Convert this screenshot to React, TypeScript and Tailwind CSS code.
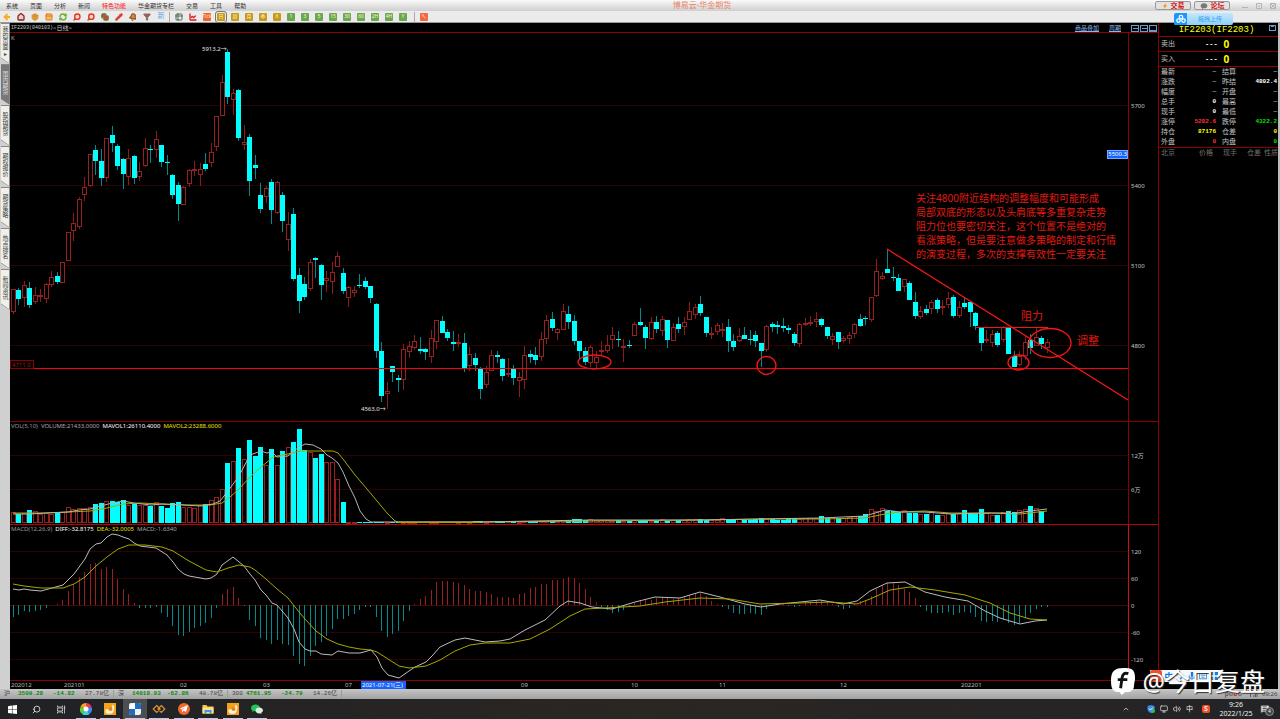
import type { ReactNode } from 'react'
import {
  ArrowLeft,
  Bell,
  ChartLine,
  ChevronUp,
  Copy,
  Filter,
  House,
  MessageSquareText,
  Monitor,
  Package,
  PanelTop,
  Pencil,
  RefreshCw,
  Search,
  Table2,
  Volume2,
} from 'lucide-react'

type Candle = [dir: 'u' | 'd', high: number, top: number, bottom: number, low: number]

// heights are thirds of a pixel, counted down from the base of each block
const candleBlocks: { base: number; rows: Candle[] }[] = [
  {
    base: 30,
    rows: [
      ['u', 778, 778, 846, 851], ['d', 774, 780, 806, 825], ['u', 753, 766, 803, 831], ['d', 757, 773, 826, 833],
      ['u', 772, 796, 815, 822], ['u', 778, 796, 800, 816], ['u', 759, 763, 806, 818], ['u', 723, 742, 765, 771],
      ['d', 726, 738, 755, 762], ['u', 697, 697, 758, 758], ['u', 606, 606, 692, 692], ['u', 549, 580, 602, 632],
      ['u', 502, 508, 590, 598], ['u', 442, 472, 494, 513], ['u', 371, 373, 467, 470], ['d', 345, 360, 392, 435],
      ['d', 357, 393, 445, 468], ['u', 323, 325, 443, 456], ['d', 288, 315, 338, 366], ['d', 341, 348, 409, 419],
      ['d', 384, 387, 431, 476], ['u', 357, 385, 440, 464], ['d', 374, 378, 444, 461], ['u', 397, 423, 440, 452],
      ['u', 324, 354, 407, 410], ['d', 346, 357, 361, 398], ['u', 303, 328, 359, 385], ['d', 345, 345, 397, 410],
      ['d', 375, 396, 399, 435], ['d', 432, 435, 495, 507], ['d', 457, 466, 523, 573], ['u', 468, 472, 524, 524],
      ['u', 416, 421, 463, 470], ['u', 392, 417, 421, 437], ['u', 398, 418, 436, 468], ['d', 369, 401, 416, 423],
      ['u', 340, 367, 398, 410], ['u', 257, 259, 350, 362], ['u', 135, 157, 257, 257], ['d', 57, 66, 200, 222],
    ],
  },
  {
    base: 40,
    rows: [
      ['u', 147, 160, 180, 225], ['d', 147, 150, 295, 302], ['u', 255, 307, 314, 330], ['d', 281, 292, 422, 467],
      ['d', 345, 376, 383, 417], ['d', 429, 466, 506, 518], ['u', 438, 444, 471, 488], ['d', 417, 426, 510, 551],
      ['u', 423, 427, 518, 521], ['d', 457, 465, 543, 576], ['u', 516, 552, 599, 633], ['d', 503, 523, 718, 723],
      ['d', 685, 705, 784, 819], ['d', 711, 731, 772, 780], ['u', 657, 667, 746, 753], ['d', 650, 654, 661, 714],
      ['d', 671, 676, 735, 780], ['u', 692, 715, 723, 756], ['u', 666, 697, 725, 761], ['u', 636, 648, 680, 680],
      ['d', 684, 699, 753, 762], ['u', 738, 742, 773, 801], ['u', 737, 751, 759, 771], ['d', 703, 735, 738, 745],
      ['d', 711, 724, 740, 746], ['d', 739, 739, 775, 788], ['d', 790, 793, 932, 954], ['d', 906, 933, 1067, 1086],
      ['u', 1026, 1053, 1063, 1106], ['d', 979, 979, 995, 1026], ['d', 1005, 1015, 1019, 1055], ['u', 912, 928, 1019, 1050],
      ['u', 903, 918, 937, 954], ['u', 885, 904, 923, 930], ['d', 891, 926, 932, 941], ['d', 925, 928, 937, 960],
      ['u', 870, 894, 950, 969], ['u', 839, 841, 906, 926], ['d', 828, 844, 878, 878], ['d', 867, 876, 894, 903],
      ['d', 873, 905, 911, 934],
    ],
  },
  {
    base: 270,
    rows: [
      ['u', 192, 216, 221, 230], ['d', 189, 219, 298, 305], ['u', 230, 253, 287, 302], ['d', 249, 264, 286, 303],
      ['d', 291, 294, 357, 387], ['u', 288, 306, 344, 353], ['u', 240, 255, 302, 302], ['d', 243, 255, 261, 279],
      ['d', 264, 267, 318, 333], ['u', 264, 310, 315, 322], ['d', 286, 295, 323, 345], ['u', 306, 321, 332, 381],
      ['u', 228, 255, 329, 356], ['d', 240, 252, 261, 279], ['d', 231, 255, 269, 284], ['u', 187, 208, 260, 272],
      ['u', 136, 151, 208, 222], ['d', 126, 147, 175, 183], ['u', 174, 178, 188, 210], ['u', 102, 124, 179, 179],
      ['d', 108, 131, 155, 178], ['d', 135, 153, 212, 225], ['d', 213, 214, 243, 268], ['d', 231, 242, 275, 284],
      ['u', 226, 231, 278, 291], ['u', 244, 260, 279, 294], ['u', 212, 240, 245, 258], ['u', 195, 226, 243, 249],
      ['u', 172, 196, 211, 237], ['d', 183, 207, 210, 230], ['u', 208, 228, 230, 275], ['d', 209, 224, 228, 234],
      ['u', 156, 163, 199, 199], ['d', 114, 156, 165, 167], ['d', 166, 171, 204, 237], ['u', 141, 156, 206, 210],
      ['d', 138, 157, 178, 188], ['u', 138, 148, 183, 197], ['d', 151, 151, 211, 235], ['u', 160, 171, 212, 212],
      ['d', 142, 162, 178, 188], ['u', 140, 156, 170, 195], ['u', 96, 123, 149, 151], ['u', 102, 111, 135, 146],
      ['d', 78, 103, 129, 138], ['d', 141, 141, 189, 201], ['u', 171, 189, 191, 208], ['u', 160, 165, 187, 196],
      ['u', 160, 176, 182, 201], ['d', 148, 172, 214, 246], ['d', 192, 213, 232, 243],
    ],
  },
  {
    base: 240,
    rows: [
      ['u', 264, 287, 303, 307], ['d', 262, 286, 298, 298], ['d', 270, 296, 300, 314], ['d', 273, 286, 303, 320],
      ['d', 310, 310, 332, 382], ['u', 256, 258, 331, 335], ['d', 247, 251, 262, 275], ['d', 243, 256, 262, 283],
      ['d', 235, 258, 265, 276], ['d', 255, 264, 269, 283], ['d', 276, 282, 309, 319], ['u', 248, 253, 311, 320],
      ['u', 235, 248, 255, 258], ['u', 228, 246, 250, 258], ['u', 217, 238, 245, 260], ['d', 233, 237, 255, 261],
      ['d', 261, 262, 289, 296], ['u', 279, 289, 301, 314], ['d', 276, 277, 305, 327], ['u', 288, 295, 302, 308],
      ['u', 275, 286, 297, 311], ['u', 249, 251, 282, 293], ['d', 222, 236, 257, 262], ['d', 228, 233, 238, 255],
      ['u', 172, 172, 239, 245], ['u', 57, 94, 167, 171], ['u', 95, 107, 116, 120], ['d', 28, 86, 98, 98],
      ['d', 82, 112, 114, 123], ['d', 103, 115, 152, 153], ['u', 118, 118, 140, 156], ['d', 122, 130, 180, 180],
      ['d', 156, 186, 228, 238], ['u', 198, 213, 230, 236], ['d', 196, 206, 220, 226], ['u', 180, 187, 206, 221],
      ['d', 174, 180, 206, 220], ['u', 180, 199, 203, 225], ['u', 156, 174, 194, 203], ['d', 165, 171, 229, 233],
      ['u', 182, 202, 228, 233], ['d', 174, 190, 201, 208], ['d', 183, 187, 216, 260], ['d', 215, 218, 258, 270],
      ['d', 262, 262, 309, 333], ['u', 270, 297, 300, 310], ['u', 270, 282, 308, 320], ['d', 273, 279, 316, 320],
      ['u', 258, 260, 300, 306], ['d', 260, 260, 341, 341], ['d', 334, 347, 380, 380], ['u', 333, 347, 375, 378],
      ['u', 288, 307, 347, 360], ['d', 283, 300, 324, 342], ['u', 264, 292, 318, 318], ['d', 287, 295, 312, 328],
      ['u', 297, 307, 323, 338],
    ],
  },
]

const candles = candleBlocks.flatMap(({ base, rows }) =>
  rows.map(([dir, ...ys]) => ({ dir, ys: ys.map((y) => Math.round(base + y / 3)) })),
)

const volumes = [
  11, 9, 10, 13, 12, 9, 10, 9, 10, 11, 16, 14, 15, 15, 16, 19, 20, 22, 22, 21, 23, 18, 19, 18, 18, 17, 21, 17, 15,
  20, 21, 16, 16, 15, 18, 19, 23, 26, 34, 60, 62, 75, 64, 83, 67, 76, 58, 74, 58, 72, 76, 81, 94, 73, 71, 65, 69, 61,
  61, 44, 21, 1, 1, 1, 1, 1, 1, 1, 1, 1, 1, 1, 1, 1, 1, 1, 1, 1, 1, 1, 1, 1, 1, 1, 2, 2, 1, 2, 2, 1, 2, 2, 1, 2, 2,
  2, 2, 2, 2, 2, 3, 3, 4, 4, 3, 4, 3, 3, 3, 2, 3, 2, 2, 3, 2, 3, 2, 2, 4, 2, 3, 3, 3, 4, 4, 4, 3, 3, 3, 5, 4, 3, 4,
  3, 3, 4, 5, 4, 4, 3, 3, 4, 5, 4, 5, 5, 5, 7, 5, 6, 5, 5, 6, 7, 7, 9, 14, 12, 15, 12, 12, 11, 13, 10, 10, 9, 9, 12,
  8, 8, 10, 9, 10, 13, 9, 9, 14, 10, 8, 8, 11, 12, 11, 13, 14, 17, 15, 12,
].slice(0, candles.length)

const macd = [
  -12, -10, -6, -7, -6, -5, -3, 0, 1, 5, 14, 20, 28, 33, 41, 42, 36, 38, 36, 26, 16, 11, 2, -3, -3, -3, -2, -8, -12,
  -21, -30, -31, -27, -23, -21, -18, -13, -3, 11, 16, 18, 7, -1, -15, -21, -33, -35, -39, -35, -39, -40, -51, -59, -61,
  -51, -41, -37, -31, -24, -14, -14, -11, -9, -5, -2, -2, -12, -26, -32, -29, -26, -16, -6, 1, 6, 9, 15, 23, 24, 24,
  23, 22, 20, 16, 14, 14, 13, 11, 8, 8, 8, 7, 11, 12, 17, 18, 21, 21, 25, 25, 26, 28, 27, 22, 16, 8, 3, -2, -5, -8,
  -7, -5, -2, 2, 5, 6, 5, 7, 8, 7, 6, 7, 9, 10, 12, 12, 9, 4, 1, -2, -4, -8, -9, -9, -8, -9, -10, -4, -1, 1, 1, -1,
  -2, -1, 2, 3, 4, 5, 4, 1, -2, -4, -3, 1, 4, 5, 9, 16, 20, 22, 22, 20, 16, 13, 7, -2, -6, -8, -8, -8, -7, -10, -8,
  -7, -8, -12, -16, -17, -16, -17, -15, -18, -20, -18, -13, -8, -4, -2, -2,
].slice(0, candles.length)

const mavol1 =
  '13,514 30,514 46,513 68,512 79,510 90,509 101,506 112,503 123,501 134,503 151,505 162,504 183,505 200,506 213,504 220,501 228,491 239,476 250,455 261,451 267,453 272,452 277,457 288,456 294,451 299,447 305,444 313,445 321,449 327,455 332,458 338,463 343,472 349,486 355,498 360,511 366,519 371,522 480,522 590,520 700,520 760,519 820,518 865,516 885,510 900,512 925,512 950,514 990,513 1003,513 1010,514 1030,511 1047,509'
const mavol2 =
  '13,513 46,513 68,512 90,511 107,508 123,504 140,503 162,504 187,505 210,505 222,503 230,497 239,489 250,477 261,467 272,458 277,456 288,454 300,451 320,451 333,451 338,453 343,459 355,475 367,489 377,501 387,513 395,521 398,522 480,522 590,521 700,520 760,519 820,519 865,518 885,514 900,512 925,511 950,513 990,513 1020,514 1047,511'
const diff =
  '13,589 19,590 24,589 30,590 41,591 52,588 63,585 74,574 85,559 90,549 96,544 101,543 107,537 112,534 118,535 123,537 129,539 134,543 140,546 156,548 167,555 173,562 178,569 184,574 189,576 206,579 211,578 217,574 222,565 233,557 244,566 250,574 255,580 261,590 266,595 272,603 277,605 288,618 294,629 299,642 305,649 310,651 316,651 321,654 332,655 338,651 349,653 360,653 371,650 377,657 382,668 388,675 399,678 409,671 415,667 426,662 432,656 440,647 455,640 465,638 475,640 485,642 500,641 510,639 525,630 545,620 560,606 568,601 580,603 592,607 612,609 635,602 655,597 680,598 700,592 720,597 745,604 761,607 780,604 800,602 820,600 843,604 857,601 870,591 887,583 905,582 925,592 945,597 968,601 985,611 1000,618 1020,624 1035,621 1047,620'
const dea =
  '13,584 24,586 41,588 63,588 74,584 85,577 96,566 107,557 118,549 129,545 145,545 162,547 173,551 189,561 206,570 217,572 228,568 239,565 250,567 255,570 266,579 277,589 288,598 299,612 305,619 316,631 327,639 338,644 349,647 360,649 371,650 377,652 388,659 399,666 409,668 426,666 440,660 455,651 470,645 485,643 510,643 530,639 550,629 570,616 585,609 605,608 640,606 665,602 700,598 730,599 760,604 800,603 830,602 857,604 870,599 890,590 910,587 935,590 965,595 990,603 1010,613 1030,619 1047,620'

const menus = ['系统', '页面', '分析', '新闻', '特色功能', '华金期货专栏', '交易', '工具', '帮助']

const pageTabs = ['我的页面▸', '国内期货', '股指期货', '期权报价', '期货策略', '热点排名', '新闻资讯']

const periods: { label: string; look: string }[] = [
  { label: 'Tick', look: 'bg-[#f0642d]' },
  { label: '日', look: 'bg-[#c79a16] outline outline-offset-1 outline-[#777]' },
  { label: '周', look: 'bg-[#c79a16]' },
  { label: '月', look: 'bg-[#c79a16]' },
  { label: '季', look: 'bg-[#c79a16]' },
  { label: 'X', look: 'bg-[#c79a16]' },
  { label: '1', look: 'bg-[#6aa850]' },
  { label: '3', look: 'bg-[#6aa850]' },
  { label: '5', look: 'bg-[#6aa850]' },
  { label: '15', look: 'bg-[#6aa850]' },
  { label: '30', look: 'bg-[#6aa850]' },
  { label: '60', look: 'bg-[#6aa850]' },
  { label: '2H', look: 'bg-[#6aa850]' },
  { label: '4H', look: 'bg-[#6aa850]' },
  { label: 'Y', look: 'bg-[#6aa850]' },
]

const tools = [
  { name: '后退', icon: <ArrowLeft className="size-2 fill-[#ffc21a] text-[#f5b020]" strokeWidth={6} /> },
  { name: '首页', icon: <House className="size-2 fill-[#e8d0c8] text-[#8c2626]" strokeWidth={4} /> },
  { name: '数据', icon: <Package className="size-2 fill-[#e8a030] text-[#c98a2c]" strokeWidth={2} /> },
  { name: '窗口', icon: <PanelTop className="size-2 fill-[#f6c04c] text-[#e0762a]" strokeWidth={3} /> },
  { name: '刷新', icon: <RefreshCw className="size-2 text-[#6fae2e]" strokeWidth={4} /> },
  { name: '放大', icon: <Search className="size-2 -scale-x-100 fill-[#ffd9d0] text-[#e0331f]" strokeWidth={4} /> },
  { name: '缩小', icon: <Search className="size-2 -scale-x-100 fill-[#ffd9d0] text-[#e0331f]" strokeWidth={4} /> },
  { name: '叠加', icon: <Copy className="size-2 fill-[#c8443a] text-[#4b9a4b]" strokeWidth={3} /> },
  { name: '画线', icon: <Pencil className="size-2 fill-[#e6392c] text-[#d83a30]" strokeWidth={3} /> },
  { name: '预警', icon: <Bell className="size-2 rotate-12 fill-[#d98a2a] text-[#7f4a20]" strokeWidth={3} /> },
  { name: '选股', icon: <Filter className="size-2 fill-[#c05050] text-[#777]" strokeWidth={3} /> },
  { name: '新闻', icon: <span className="text-[7px] text-[#6aa4e8]">新</span> },
]

const quoteRows: [string, string, string, string, string, string][] = [
  ['最新', '—', 'text-[#aaa]', '结算', '—', 'text-[#aaa]'],
  ['涨跌', '—', 'text-[#aaa]', '昨结', '4802.4', 'text-white'],
  ['幅度', '—', 'text-[#aaa]', '开盘', '—', 'text-[#aaa]'],
  ['总手', '0', 'text-white', '最高', '—', 'text-[#aaa]'],
  ['现手', '0', 'text-white', '最低', '—', 'text-[#aaa]'],
  ['涨停', '5282.6', 'text-[#ff3232]', '跌停', '4322.2', 'text-[#00e600]'],
  ['持仓', '87176', 'text-[#ffff00]', '仓差', '0', 'text-[#ffff00]'],
  ['外盘', '0', 'text-[#ff3232]', '内盘', '0', 'text-[#00e600]'],
]

const indexes = [
  { name: '沪', price: '3509.28', change: '-14.82', amount: '27.78亿' },
  { name: '深', price: '14018.93', change: '-62.86', amount: '48.78亿' },
  { name: '300', price: '4761.95', change: '-24.79', amount: '14.26亿' },
]

// the plots start right of the page tabs
const ORIGIN_X = 10
const FIRST_X = 13.3
const STEP = 5.5

const slotX = (i: number) => Math.floor(FIRST_X + i * STEP)

function Plot({ top, height, grid, children }: { top: number; height: string; grid: number[]; children: ReactNode }) {
  return (
    <svg className={`${height} w-0 min-w-0 flex-1`} shapeRendering="crispEdges">
      {grid.map((y) => (
        <line key={y} x1="0" x2="100%" y1={y - top + 0.5} y2={y - top + 0.5} stroke="#2e0202" />
      ))}
      <g transform={`translate(${-ORIGIN_X} ${-top})`}>{children}</g>
    </svg>
  )
}

function Axis({ top, labels, look }: { top: number; labels: [number, string][]; look: string }) {
  return (
    <svg className={`w-[30px] shrink-0 border-l ${look}`} aria-label="坐标">
      {labels.map(([y, text]) => (
        <text key={y} x="2" y={y - top + 3} fontSize="6" fill="#c4c4c4">
          {text}
        </text>
      ))}
    </svg>
  )
}

function PricePanel() {
  return (
    <section className="relative flex border-b border-[#8b0000]">
      <Plot top={33} height="h-[388px]" grid={[105, 185, 265, 345]}>
        {candles.map(({ dir, ys: [high, top, bottom, low] }, i) => {
          const x = slotX(i)
          const h = Math.max(1, bottom - top)
          return dir === 'd' ? (
            <g key={i}>
              <rect x={x} y={high} width="1" height={low - high} fill="#008c8c" />
              <rect x={x - 2} y={top} width="5" height={h} fill="#00ffff" />
            </g>
          ) : (
            <g key={i}>
              <rect x={x} y={high} width="1" height={low - high} fill="#8c1c1c" />
              <rect x={x - 1.5} y={top + 0.5} width="4" height={Math.max(h - 1, 0.5)} fill="#000" stroke="#982020" />
            </g>
          )
        })}
        <rect x="10" y="368" width="1118" height="1" fill="#ff0000" />
        <rect x="10.5" y="360.5" width="23" height="8" fill="none" stroke="#8b0000" />
        <g fill="none" stroke="#f21616" shapeRendering="auto">
          <line x1="887" y1="249" x2="1128" y2="400" strokeWidth="1.3" />
          <line x1="976" y1="327.5" x2="1048" y2="327.5" />
          <ellipse cx="594.5" cy="362" rx="16.5" ry="7" strokeWidth="1.4" />
          <ellipse cx="766.5" cy="365.5" rx="9.5" ry="9" strokeWidth="1.4" />
          <ellipse cx="1018.5" cy="362.5" rx="10.5" ry="7.5" strokeWidth="1.4" />
          <ellipse cx="1050" cy="343" rx="21" ry="14.5" strokeWidth="1.4" />
        </g>
        <text x="12" y="367" fontSize="6" fill="#a01818">
          4711.0
        </text>
        <text x="11" y="40" fontSize="6" fill="#aaa">
          K
        </text>
        <text x="202" y="51" fontSize="6" fill="#e4e4e4">
          5913.2→
        </text>
        <text x="361" y="411" fontSize="6" fill="#e4e4e4">
          4563.0→
        </text>
        <g fontSize="11" fill="#e01a10">
          <text x="1021" y="320">
            阻力
          </text>
          <text x="1077" y="345">
            调整
          </text>
        </g>
      </Plot>
      <p className="absolute top-[158px] left-[906px] text-[10px] leading-[14px] whitespace-nowrap text-[#e01a10]">
        关注4800附近结构的调整幅度和可能形成
        <br />
        局部双底的形态以及头肩底等多重复杂走势
        <br />
        阻力位也要密切关注，这个位置不是绝对的
        <br />
        看涨策略，但是要注意做多策略的制定和行情
        <br />
        的演变过程，多次的支撑有效性一定要关注
      </p>
      <Axis
        top={33}
        look="h-[388px] border-[#8b0000]"
        labels={[
          [105, '5700'],
          [185, '5400'],
          [265, '5100'],
          [345, '4800'],
        ]}
      />
      <span className="absolute top-[117px] right-[30px] h-[9px] bg-[#1464ff] px-px text-[6px] leading-[9px] outline -outline-offset-1 outline-[#7aa8ff]">
        5500.3
      </span>
    </section>
  )
}

function VolumePanel() {
  return (
    <section className="relative flex border-b border-[#c00000]">
      <Plot top={422} height="h-[102px]" grid={[455, 489]}>
        {volumes.map((h, i) => {
          const x = slotX(i)
          return candles[i].dir === 'd' ? (
            <rect key={i} x={x - 2} y={523 - h} width="5" height={h} fill="#00ffff" />
          ) : (
            <rect key={i} x={x - 1.5} y={523.5 - h} width="4" height={Math.max(h - 1, 0.5)} fill="none" stroke="#982020" />
          )
        })}
        <g fill="none" shapeRendering="auto">
          <polyline points={mavol2} stroke="#a8a800" />
          <polyline points={mavol1} stroke="#b4b4b4" />
          <line x1="398" y1="522.5" x2="480" y2="522.5" stroke="#a8a800" />
        </g>
      </Plot>
      <p className="absolute top-0 left-px flex gap-[3px] text-[6px] leading-[9px] whitespace-nowrap">
        <span className="text-[#999]">VOL(5,10)</span>
        <span className="text-[#aaa]">VOLUME:21433.0000</span>
        <span>MAVOL1:26110.4000</span>
        <span className="text-[#e6e600]">MAVOL2:23288.6000</span>
      </p>
      <Axis
        top={422}
        look="h-[102px] border-[#8b0000]"
        labels={[
          [455, '12万'],
          [489, '6万'],
        ]}
      />
    </section>
  )
}

function MacdPanel() {
  return (
    <section className="relative flex flex-1">
      <Plot top={525} height="h-[155px]" grid={[551, 578, 605, 632, 659]}>
        <rect x="10" y="605" width="1118" height="1" fill="#4a0606" />
        {macd.map((v, i) => (
          <rect
            key={i}
            x={slotX(i)}
            y={605 - Math.max(v, 0)}
            width="1"
            height={Math.abs(v)}
            fill={v > 0 ? '#982020' : '#008c8c'}
          />
        ))}
        <g fill="none" shapeRendering="auto">
          <polyline points={diff} stroke="#bcbcbc" />
          <polyline points={dea} stroke="#a8a800" />
        </g>
      </Plot>
      <p className="absolute top-0 left-px flex gap-[3px] text-[6px] leading-[9px] whitespace-nowrap">
        <span className="text-[#999]">MACD(12,26,9)</span>
        <span>DIFF:-32.8175</span>
        <span className="text-[#e6e600]">DEA:-32.0005</span>
        <span className="text-[#aaa]">MACD:-1.6340</span>
      </p>
      <Axis
        top={525}
        look="h-[155px] border-[#d01010]"
        labels={[
          [551, '120'],
          [578, '60'],
          [605, '0'],
          [632, '-60'],
          [659, '-120'],
        ]}
      />
    </section>
  )
}

function DateAxis() {
  return (
    <svg className="h-[9px] w-full border-t border-[#8b0000] bg-black" fontSize="6" fill="#bbb">
      <text x="1" y="6">202012</text>
      <text x="54" y="6">202101</text>
      <text x="170" y="6">02</text>
      <text x="253" y="6">03</text>
      <text x="335" y="6">07</text>
      <rect x="351" width="45" height="8" fill="#1464ff" />
      <text x="352" y="6" fill="#fff">2021-07-21(三)</text>
      <text x="511" y="6">09</text>
      <text x="621" y="6">10</text>
      <text x="709" y="6">11</text>
      <text x="830" y="6">12</text>
      <text x="951" y="6">202201</text>
    </svg>
  )
}

function TitleBar() {
  return (
    <header className="relative flex h-[11px] items-center bg-linear-to-b from-[#fafafa] to-[#cfcfcf] text-[6px] text-[#333]">
      <nav className="flex gap-3 pl-1.5">
        {menus.map((menu) => (
          <button key={menu} className={menu === '特色功能' ? 'leading-[10px] text-[#ff1414]' : 'leading-[10px]'}>
            {menu}
          </button>
        ))}
      </nav>
      <h1 className="absolute inset-x-0 top-0 mx-auto w-max pl-[124px] font-['Liberation_Serif','Noto_Sans_CJK_SC',serif] text-[8px] leading-[11px] text-[#e88464]">
        博易云-华金期货
      </h1>
      <div className="relative ml-auto flex items-center gap-[3px] font-bold">
        <button className="flex h-[9px] w-9 items-center justify-center gap-[3px] rounded-[2px] border border-[#999] bg-[#e2e2e2] text-[7px] leading-[7px] text-[#d81414]">
          <svg className="size-1.5" viewBox="0 0 10 10" fill="#f59a1a">
            <path d="M7 0 1 6h3L3 10l6-6H6z" />
          </svg>
          交易
        </button>
        <button className="flex h-[9px] w-9 items-center justify-center gap-[3px] rounded-[2px] border border-[#999] bg-[#e2e2e2] text-[7px] leading-[7px] text-[#d81414]">
          <svg className="size-2" viewBox="0 0 12 12" fill="#777">
            <path d="M6 2C3 2 1 3.500 1 6c0 1.500 1 2.500 2 3v2l2-1.500h1c3 0 5-1.500 5-3.500S9 2 6 2z" />
          </svg>
          论坛
        </button>
      </div>
      <div className="flex gap-2 pr-1 pl-3 text-[#aaa]">
        <button className="w-1.5" aria-label="最小化">
          <svg className="size-1.5" viewBox="0 0 6 6" stroke="#b4b4b4">
            <path d="M0 4.500h6" />
          </svg>
        </button>
        <button className="w-1.5" aria-label="最大化">
          <svg className="size-1.5" viewBox="0 0 6 6" fill="none" stroke="#b4b4b4">
            <path d="M.5.500h5v5h-5zM2 3h2" />
          </svg>
        </button>
        <button className="w-1.5" aria-label="关闭">
          <svg className="size-1.5" viewBox="0 0 6 6" fill="none" stroke="#b4b4b4">
            <path d="M.5.500h5v5h-5zM1 1l4 4M5 1 1 5" />
          </svg>
        </button>
      </div>
    </header>
  )
}

function Toolbar() {
  return (
    <div className="flex h-3 items-center border-b border-[#999] bg-[#ebebeb]">
      {tools.map((tool) => (
        <button key={tool.name} className="flex h-[11px] w-3.5 items-center justify-center" aria-label={tool.name}>
          {tool.icon}
        </button>
      ))}
      <span className="ml-px h-2.5 w-px bg-[#aaa]" />
      <button className="ml-0.5 flex h-[11px] w-3.5 items-center justify-center" aria-label="报价">
        <Table2 className="size-2 text-[#4e6a58]" strokeWidth={3} />
      </button>
      <button className="flex h-[11px] w-3.5 items-center justify-center" aria-label="走势">
        <ChartLine className="size-2 text-[#d82020]" strokeWidth={4} />
      </button>
      {periods.map((period) => (
        <button key={period.label} className="flex h-[11px] w-3.5 items-center justify-center">
          <span
            className={`flex size-2 items-center justify-center rounded-[1px] text-[5px] text-[#fff6cc] ${period.look}`}
          >
            {period.label}
          </span>
        </button>
      ))}
      <span className="ml-1 h-2.5 w-px bg-[#aaa]" />
      <button className="ml-0.5 flex h-[11px] w-3.5 items-center justify-center" aria-label="设置">
        <span className="flex size-2 items-center justify-center rounded-[1px] bg-[#f2683c] text-[5px] text-white">↖</span>
      </button>
    </div>
  )
}

function PageTabs() {
  return (
    <aside className="flex w-[10px] shrink-0 flex-col bg-[#d0d0d0]">
      {pageTabs.map((tab, i) => (
        <button
          key={tab}
          className="h-[41px] w-full bg-[#888] pl-px [clip-path:polygon(10%_0,100%_0,100%_100%,10%_86%)]"
        >
          <span
            className={`flex h-[39px] w-[8px] items-center justify-center pb-1 text-[6px] leading-[8px] whitespace-nowrap [text-orientation:upright] [writing-mode:vertical-rl] [clip-path:polygon(0_0,100%_0,100%_100%,0_86%)] ${
              i === 1 ? 'bg-[#777] text-[#ddd]' : 'bg-[#f0f0e8] text-[#444]'
            }`}
          >
            {tab}
          </span>
        </button>
      ))}
    </aside>
  )
}

function ChartHeader() {
  return (
    <div className="flex h-[9px] items-center border-b border-[#8b0000] pr-px pl-px text-[6px] leading-[8px]">
      <span className="font-['Liberation_Mono','Noto_Sans_CJK_SC',monospace] text-[5px] text-[#ccc]">IF2203(040103)</span>
      <span className="text-[#ccc]">&lt;日线&gt;</span>
      <a href="#overlay" className="ml-auto text-[#8cb8e8] underline">
        商品叠加
      </a>
      <a href="#period" className="ml-2.5 text-[#8cb8e8] underline">
        周期
      </a>
      <svg className="ml-2.5 h-2 w-[26px]" fill="none" stroke="#6c9ccc" shapeRendering="crispEdges">
        <path d="M.5 1.500h7v6h-7zM9.500 1.500h7v6h-7zM18.500 1.500h7v6h-7zM2 4.500h5M11 4.500h5M19 6.500h6" />
      </svg>
    </div>
  )
}

function QuotePanel() {
  return (
    <aside className="flex w-[122px] shrink-0 flex-col border-r-2 border-l border-r-[#bbb] border-l-[#8b0000] pt-px text-[#c4c4c4]">
      <h2 className="relative h-[13px] border-b border-[#8b0000] pr-1 text-center font-['Liberation_Mono'] text-[9px] leading-[12px] text-[#ffff00]">
        IF2203(IF2203)
        <svg className="absolute top-0 right-0.5 size-[7px]" fill="none" stroke="#6c9ccc" shapeRendering="crispEdges">
          <path d="M.5 1.500h6v5h-6zM2 2.500h3" />
        </svg>
      </h2>
      {['卖出', '买入'].map((side) => (
        <div key={side} className="flex h-[15px] items-center border-b border-[#8b0000] pl-0.5 text-[7px]">
          <span className="w-11">{side}</span>
          <span className="font-['Liberation_Mono'] font-bold text-white">---</span>
          <span className="ml-[6px] text-[10px] leading-[14px] font-bold text-[#ffff00]">0</span>
        </div>
      ))}
      <table className="w-full table-fixed border-b border-[#8b0000] text-[7px] leading-[10px]">
        <tbody>
          {quoteRows.map(([label, value, tone, label2, value2, tone2]) => (
            <tr key={label} className="h-2.5">
              <th className="w-5 p-0 pl-0.5 text-left font-normal">{label}</th>
              <td className={`w-[37px] p-0 text-right font-['Liberation_Mono'] text-[6px] font-bold ${tone}`}>{value}</td>
              <th className="w-6 p-0 pl-1.5 text-left font-normal whitespace-nowrap">{label2}</th>
              <td className={`p-0 pr-px text-right font-['Liberation_Mono'] text-[6px] font-bold ${tone2}`}>{value2}</td>
            </tr>
          ))}
        </tbody>
      </table>
      <div className="flex pl-0.5 text-[7px] leading-[10px] whitespace-nowrap text-[#707070]">
        <span className="w-[38px]">北京</span>
        <span className="w-6">价格</span>
        <span className="w-6">现手</span>
        <span className="w-[17px]">仓差</span>
        <span>性质</span>
      </div>
    </aside>
  )
}

function StatusBar() {
  return (
    <footer className="flex h-[10px] items-center bg-linear-to-b from-[#c6c6c6] to-[#a2a2a2] pl-1 font-['Liberation_Mono','Noto_Sans_CJK_SC',monospace] text-[6px] leading-[10px] text-[#444]">
      {indexes.map((index) => (
        <div key={index.name} className="flex w-[114px] whitespace-nowrap">
          <span className="w-3.5">{index.name}</span>
          <span className="w-[35px] font-bold text-[#088a08]">{index.price}</span>
          <span className="w-8 font-bold text-[#088a08]">{index.change}</span>
          <span className="w-7">{index.amount}</span>
          <span className="h-2 w-px self-center bg-[#999]" />
        </div>
      ))}
      <span className="ml-auto font-['Noto_Sans'] text-[7px] font-bold text-[#666]">
        po<span className="text-[#e03030]">b</span>o
      </span>
      <svg className="ml-1.5 size-2.5" viewBox="0 0 20 20" fill="none" stroke="#444" strokeWidth="1.500">
        <path d="M1 3h8L5 8zM5 8v8M12 16v-4M15 16V8M18 16V4" />
      </svg>
      <span className="w-[22px] pl-1 font-['Noto_Sans'] text-[6px]">09:26</span>
    </footer>
  )
}

const taskbarApps = [
  {
    name: '浏览器',
    icon: (
      <svg viewBox="0 0 24 24" className="size-3">
        <path d="M12 12V0a12 12 0 0 1 11 8z" fill="#f03a5a" />
        <path d="M12 12 23 8a12 12 0 0 1-4 14z" fill="#3a8cf0" />
        <path d="M12 12l7 10a12 12 0 0 1-15 0z" fill="#3ad0e8" />
        <path d="M12 12 4 22A12 12 0 0 1 1 8z" fill="#5ad03a" />
        <path d="M12 12 1 8A12 12 0 0 1 12 0z" fill="#f8a020" />
        <circle cx="12" cy="12" r="5" fill="#fff" />
      </svg>
    ),
  },
  { name: '行情', icon: <AmberIcon /> },
  {
    name: '博易云',
    icon: (
      <svg viewBox="0 0 24 24" className="size-3">
        <rect width="24" height="24" rx="4" fill="#eaf2fa" />
        <path d="M12 0h8a4 4 0 0 1 4 4v8H12zM0 12h12v12H4a4 4 0 0 1-4-4z" fill="#1f6cc0" />
        <path d="M0 12A12 12 0 0 1 12 0v12z" fill="#fff" />
      </svg>
    ),
  },
  {
    name: '工具箱',
    icon: (
      <svg viewBox="0 0 24 24" className="size-3.5">
        <rect width="24" height="24" fill="#1c2434" />
        <path d="M8 6l6 6-6 6-6-6zM16 6l6 6-6 6-6-6z" fill="none" stroke="#e8921c" strokeWidth="2" />
      </svg>
    ),
  },
  {
    name: '快讯',
    icon: (
      <svg viewBox="0 0 24 24" className="size-3">
        <circle cx="12" cy="12" r="12" fill="#f4672a" />
        <path d="M4 11 20 4l-4 14-5-3-3 4v-5l7-6-8 5z" fill="#fff" />
      </svg>
    ),
  },
  {
    name: '文件夹',
    icon: (
      <svg viewBox="0 0 24 24" className="size-3">
        <path d="M1 4h8l2 3h12v14H1z" fill="#f5c84a" />
        <path d="M1 9h22v12H1z" fill="#ffe08a" />
        <path d="M5 14h14v7h-4v-3H9v3H5z" fill="#3a9ae8" />
      </svg>
    ),
  },
  { name: '交易', icon: <AmberIcon /> },
  {
    name: '微信',
    icon: (
      <svg viewBox="0 0 24 24" className="size-3">
        <path d="M9 3C4 3 0 6 0 10c0 2 1 4 3 5l-1 3 4-2c7 2 12-2 12-6 0-4-4-7-9-7z" fill="#22c35a" />
        <path d="M16 9c-4 0-7 2-7 6 0 3 3 6 7 6l2-.5 3 1.500-.5-2.500c2-1 3.500-3 3.500-5 0-3-4-5.500-8-5.500z" fill="#d8f0dc" />
      </svg>
    ),
  },
]

function AmberIcon() {
  return (
    <svg viewBox="0 0 24 24" className="size-3">
      <rect width="24" height="24" fill="#f5a11c" />
      <path d="M3 13c3-2 6 1 9-1s5-5 5-9c4 2 4 7 3 10s-1 7-5 8-11 1-12-3z" fill="#fff3d8" />
      <circle cx="13" cy="12" r="4" fill="#e0861a" />
    </svg>
  )
}

function Taskbar() {
  return (
    <div className="flex h-5 bg-linear-to-r from-[#202226] via-[#2a2622] to-[#232427]">
      <div className="flex w-[269px] justify-between">
        <button className="flex w-6 items-center justify-center" aria-label="开始">
          <svg viewBox="0 0 16 16" className="size-[9px]" fill="#fff">
            <path d="M0 2l7-1v6.500H0zM8 1l8-1v7.500H8zM0 8.500h7V15l-7-1zM8 8.500h8V16l-8-1z" />
          </svg>
        </button>
        <button className="flex w-6 items-center justify-center" aria-label="搜索">
          <Search className="size-[9px] -scale-x-100" strokeWidth={2} />
        </button>
        <button className="flex w-6 items-center justify-center" aria-label="任务视图">
          <svg viewBox="0 0 18 18" className="size-[9px]" fill="none" stroke="#ddd" strokeWidth="1.500">
            <path d="M1 1v3h10V1M1 17v-3h10v3M1 6h10v6H1zM15 1v16M13 6h4" />
          </svg>
        </button>
        {taskbarApps.map((app, i) => (
          <button
            key={app.name}
            aria-label={app.name}
            className={`flex w-6 items-center justify-center ${i === 2 ? 'bg-[#4c4e52]' : ''}`}
          >
            <span className="flex h-full w-5 items-center justify-center border-b border-[#b8cdf0] pt-px">{app.icon}</span>
          </button>
        ))}
      </div>
      <div className="ml-auto flex items-center gap-[5px] text-[#eee]">
        <ChevronUp className="mr-3 size-2" strokeWidth={2} />
        <svg viewBox="0 0 16 16" className="size-2">
          <path d="M8 0l7 2v6c0 4-3 7-7 8-4-1-7-4-7-8V2z" fill="#3a8af0" />
          <path d="M4 7l3 3 5-5" fill="none" stroke="#fff" strokeWidth="2" />
          <circle cx="12" cy="12" r="4" fill="#3cc04a" />
        </svg>
        <Monitor className="size-2" strokeWidth={2} />
        <Volume2 className="size-2" strokeWidth={2} />
        <span className="text-[7px]">中</span>
        <span className="ml-1 flex size-2 items-center justify-center rounded-[2px] bg-[#f0502a] text-[7px] font-bold">S</span>
        <p className="ml-1 w-[34px] text-center text-[7px] leading-[9px] whitespace-nowrap">
          9:26
          <br />
          2022/1/25
        </p>
        <span className="relative mr-2.5 ml-0.5">
          <MessageSquareText className="size-2.5" fill="#eee" stroke="#333" strokeWidth={2} />
          <span className="absolute top-1 left-1.5 flex size-[7px] items-center justify-center rounded-full bg-[#444] text-[5px] outline outline-[#999]">
            4
          </span>
        </span>
      </div>
    </div>
  )
}

function Watermark() {
  return (
    <div className="absolute right-[15px] bottom-[24px] flex items-center">
      <svg viewBox="0 0 26 28" className="mr-[7px] h-[27px] w-[25px]">
        <path
          d="M13 0C21 0 25 1 25 10c0 3-1 6-1 8 0 7-6 7-9 7l-4 3-2-3C2 25 0 22 0 13 0 3 4 0 13 0z"
          fill="#fff"
        />
        <path d="M18 6c-4-2-6 1-6.500 4L10 21M7 12h10" fill="none" stroke="#111" strokeWidth="3" />
      </svg>
      <span className="text-[25px] leading-[28px] text-white [text-shadow:1px_1px_1px_#333]">@今日复盘</span>
    </div>
  )
}

function ImeBar() {
  return (
    <div className="absolute right-[58px] bottom-[37px] flex h-3 w-[72px] items-center justify-between bg-[#f4f8fc] pr-1 text-[#1c7ad8]">
      <span className="size-3 rounded-[2px] bg-[#f0502a]" />
      <svg viewBox="0 0 10 10" className="size-2" fill="none" stroke="#1c7ad8" strokeWidth="1.500">
        <path d="M1 3h8v4H1zM5 0v10" />
      </svg>
      <svg viewBox="0 0 10 10" className="size-2" fill="none" stroke="#1c7ad8" strokeWidth="1.500">
        <path d="M2 3h1M6 6c1 1 1 2-1 3" />
      </svg>
      <svg viewBox="0 0 10 10" className="size-2" fill="#1c7ad8">
        <path d="M3.500 0h3v6h-3zM1 4h1v3h6V4h1v4H5.500v2h-1V8H1z" />
      </svg>
      <svg viewBox="0 0 10 10" className="size-2" fill="none" stroke="#1c7ad8">
        <path d="M.5 1.500h9v7h-9zM2 4h6M3 6.500h4" />
      </svg>
      <svg viewBox="0 0 10 10" className="size-2" fill="#1c7ad8">
        <path d="M0 0h4v4H0zM6 0h4v4H6zM0 6h4v4H0zM6 6h4v4H6z" />
      </svg>
    </div>
  )
}

export default function App() {
  return (
    <div className="relative flex min-h-screen flex-col overflow-hidden bg-black font-['Noto_Sans','Noto_Sans_CJK_SC',sans-serif] text-white">
      <TitleBar />
      <Toolbar />
      <main className="flex flex-1">
        <PageTabs />
        <div className="flex min-w-0 flex-1 flex-col pt-px">
          <ChartHeader />
          <PricePanel />
          <VolumePanel />
          <MacdPanel />
          <DateAxis />
        </div>
        <QuotePanel />
      </main>
      <StatusBar />
      <Taskbar />
      <button className="absolute top-[13px] right-[47px] flex h-3 w-[59px] items-center overflow-hidden rounded-[2px] bg-linear-to-b from-[#c4e8fc] to-[#8ed0fa] text-[6px] text-[#3a9cf0]">
        <span className="flex h-full w-[13px] items-center justify-center bg-[#1e96ff]">
          <svg viewBox="0 0 20 18" className="size-2.5" fill="none" stroke="#fff" strokeWidth="2.500">
            <circle cx="10" cy="5" r="3.500" />
            <circle cx="5" cy="12" r="3.500" />
            <circle cx="15" cy="12" r="3.500" />
          </svg>
        </span>
        <span className="flex-1 text-center">拖拽上传</span>
      </button>
      <ImeBar />
      <Watermark />
    </div>
  )
}
